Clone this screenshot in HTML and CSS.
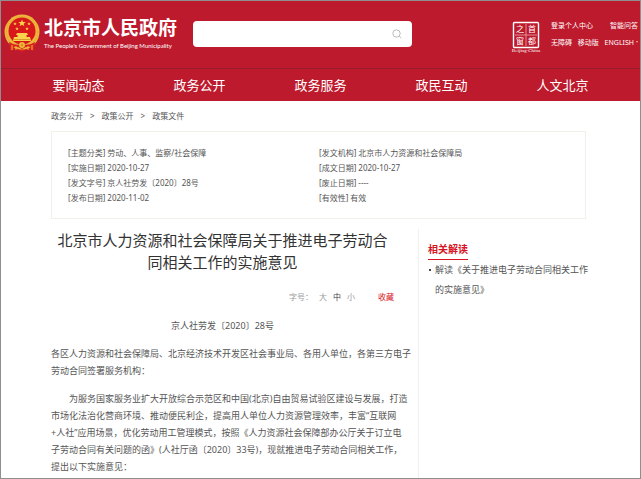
FILE: index.html
```html
<!DOCTYPE html>
<html lang="zh-CN">
<head>
	<title>北京市人民政府</title>
	<meta charset="UTF-8">
	<meta name="viewport" content="width=device-width, initial-scale=1">
	<link rel="stylesheet" href="styles.css">
</head>
<body>
	<header class="header">
		<div class="top">
			<a class="logo" href="#">
				<svg class="emblem" viewBox="0 0 36 38" aria-hidden="true">
					<path d="M7 30 L6 37 L12 35 L18 38 L24 35 L30 37 L29 30 Z" fill="#d8241c"/>
					<circle cx="18" cy="18" r="17.5" fill="#eeb53c"/>
					<circle cx="18" cy="18" r="15.5" fill="none" stroke="#dc9c2a" stroke-width="1" stroke-dasharray="1 2"/>
					<circle cx="18" cy="17" r="13.5" fill="#d9181b"/>
					<path d="M18 5.500l1 2.500h2.700l-2.100 1.700.8 2.600-2.400-1.500-2.400 1.500.8-2.600-2.100-1.700H17z" fill="#f8d24a"/>
					<g fill="#f8d24a">
						<path d="M11 8l.5 1.200h1.300l-1 .8.4 1.300-1.200-.7-1.200.7.4-1.300-1-.8h1.300z"/>
						<path d="M25 8l.5 1.200h1.300l-1 .8.4 1.300-1.200-.7-1.200.7.4-1.300-1-.8h1.300z"/>
						<path d="M13 13l.5 1.200h1.300l-1 .8.4 1.300-1.200-.7-1.200.7.4-1.300-1-.8h1.300z"/>
						<path d="M23 13l.5 1.200h1.300l-1 .8.4 1.300-1.200-.7-1.200.7.4-1.300-1-.8h1.300z"/>
						<path d="M13 19h10l1 2H12zM13.500 21h9v2h-9zM10 23h16l1 4H9z"/>
					</g>
					<path d="M10 25.500h16" stroke="#dc9c2a" stroke-width="1"/>
					<path d="M5 28Q11 32 18 30Q25 32 31 28L30 34Q24 31 18 35Q12 31 6 34Z" fill="#d8241c"/>
					<circle cx="18" cy="31" r="3" fill="#eeb53c"/>
					<circle cx="18" cy="31" r="1" fill="#c98218"/>
					<path d="M8 31v5M12 32v4M24 32v4M28 31v5" stroke="#eeb53c" stroke-width="1"/>
				</svg>
				<span class="logo-text">
					<strong class="logo-name">北京市人民政府</strong>
					<span class="logo-en">The People's Government of Beijing Municipality</span>
				</span>
			</a>
			<form class="search">
				<input class="search-input" type="text" aria-label="搜索">
				<button class="search-btn" type="button" aria-label="搜索">
					<svg viewBox="0 0 10 10" aria-hidden="true">
						<circle cx="4.500" cy="4.500" r="3.700"/>
						<path d="M7.300 7.300L9.300 9"/>
					</svg>
				</button>
			</form>
			<div class="top-right">
				<a class="window" href="#">
					<svg viewBox="0 0 30 32">
						<rect x="2.500" y="1.500" width="25" height="25" rx="1" fill="none" stroke="#fff" stroke-width="1.400"/>
						<path d="M15 3v22M4 14h22" stroke="#e08f99" stroke-width="1"/>
						<text x="9" y="11" font-size="8">之</text>
						<text x="21" y="11" font-size="8">首</text>
						<text x="9" y="23" font-size="8">窗</text>
						<text x="21" y="23" font-size="8">都</text>
						<text class="window-en" x="15" y="31" font-size="5">Beijing-China</text>
					</svg>
				</a>
				<div class="tools">
					<div class="tools-row">
						<a href="#">登录个人中心</a>
						<a href="#">智能问答</a>
					</div>
					<div class="tools-row">
						<a href="#">无障碍</a>
						<a href="#">移动版</a>
						<a class="english" href="#">ENGLISH</a>
					</div>
				</div>
			</div>
		</div>
		<nav class="nav">
			<a href="#">要闻动态</a>
			<a href="#">政务公开</a>
			<a href="#">政务服务</a>
			<a href="#">政民互动</a>
			<a href="#">人文北京</a>
		</nav>
	</header>

	<main class="container">
		<div class="crumbs">
			<a href="#">政务公开</a><span>&gt;</span><a href="#">政策公开</a><span>&gt;</span><a href="#">政策文件</a>
		</div>

		<div class="info">
			<ul>
				<li>[主题分类] 劳动、人事、监察/社会保障</li>
				<li>[实施日期] 2020-10-27</li>
				<li>[发文字号] 京人社劳发〔2020〕28号</li>
				<li>[发布日期] 2020-11-02</li>
			</ul>
			<ul>
				<li>[发文机构] 北京市人力资源和社会保障局</li>
				<li>[成文日期] 2020-10-27</li>
				<li>[废止日期] ----</li>
				<li>[有效性] 有效</li>
			</ul>
		</div>

		<div class="columns">
			<article class="article">
				<h1>北京市人力资源和社会保障局关于推进电子劳动合<br>同相关工作的实施意见</h1>
				<div class="font-size">
					<span>字号：</span>
					<button type="button">大</button>
					<button class="active" type="button">中</button>
					<button type="button">小</button>
					<a class="fav" href="#">收藏</a>
				</div>
				<p class="doc-no">京人社劳发〔2020〕28号</p>
				<div class="article-text">
					<p>各区人力资源和社会保障局、北京经济技术开发区社会事业局、各用人单位，各第三方电子<br>劳动合同签署服务机构：</p>
					<p class="indent">为服务国家服务业扩大开放综合示范区和中国(北京)自由贸易试验区建设与发展，打造<br>市场化法治化营商环境、推动便民利企，提高用人单位人力资源管理效率，丰富“互联网<br>+人社”应用场景，优化劳动用工管理模式，按照《人力资源社会保障部办公厅关于订立电<br>子劳动合同有关问题的函》(人社厅函〔2020〕33号)，现就推进电子劳动合同相关工作，<br>提出以下实施意见：</p>
				</div>
			</article>
			<aside class="related">
				<h2>相关解读</h2>
				<ul>
					<li><a href="#">解读《关于推进电子劳动合同相关工作<br>的实施意见》</a></li>
				</ul>
			</aside>
		</div>
	</main>
</body>
</html>
```

FILE: styles.css
```css
* {
	box-sizing: border-box;
}
body {
	display: flex;
	flex-direction: column;
	margin: 0;
	min-height: 100vh;
	border: 1px solid #8f8f8f;
	background: #fff;
	color: #555;
	font-family: "Noto Sans", "Noto Sans CJK SC", sans-serif;
	font-size: 8px;
}
h1, h2, p, ul {
	margin: 0;
	padding: 0;
}
ul {
	list-style: none;
}
a {
	color: inherit;
	text-decoration: none;
}

/* header */
.header {
	background: #bd1a2d;
	color: #fff;
}
.top {
	display: flex;
	align-items: flex-start;
	height: 68px;
	padding: 13px 2px 0 3px;
	border-bottom: 1px solid #981c2e;
}
.logo {
	display: flex;
	gap: 4px;
	width: 189px;
}
.emblem {
	flex: none;
	width: 36px;
	height: 38px;
}
.logo-text {
	display: flex;
	flex-direction: column;
	padding-top: 1px;
	white-space: nowrap;
}
.logo-name {
	font-size: 19px;
	line-height: 26px;
}
.logo-en {
	font-family: Lato, sans-serif;
	font-size: 6px;
	line-height: 9px;
}
.search {
	display: flex;
	align-items: center;
	width: 219px;
	height: 26px;
	margin-top: 7px;
	padding-right: 9px;
	border-radius: 4px;
	background: #fff;
}
.search-input {
	flex: 1;
	min-width: 0;
	height: 100%;
	padding: 0 8px;
	border: 0;
	background: none;
	outline: 0;
}
.search-btn {
	width: 12px;
	height: 12px;
	padding: 1px;
	border: 0;
	background: none;
}
.search-btn svg {
	display: block;
	fill: none;
	stroke: #bbb;
}
.top-right {
	display: flex;
	gap: 10px;
	margin-left: auto;
	padding-top: 7px;
}
.window svg {
	display: block;
	width: 30px;
	height: 32px;
}
.window text {
	fill: #fff;
	text-anchor: middle;
}
.window .window-en {
	font-family: "Liberation Serif", serif;
}
.tools {
	width: 87px;
	font-size: 7px;
	line-height: 16px;
	white-space: nowrap;
}
.tools-row {
	display: flex;
	justify-content: space-between;
	margin-top: -3px;
	margin-bottom: 4px;
}
.english::after {
	content: "";
	display: inline-block;
	margin-left: 2px;
	border: 1px solid transparent;
	border-top: 2px solid #f0b070;
	vertical-align: 1px;
}
.nav {
	display: flex;
	padding: 0 17px;
	font-size: 13px;
	line-height: 32px;
	text-align: center;
}
.nav a {
	flex: 1;
}

/* content */
.container {
	display: flex;
	flex: 1;
	flex-direction: column;
	padding: 0 54px 0 50px;
}
.crumbs {
	padding: 7px 0;
	line-height: 16px;
}
.crumbs span {
	margin: 0 7px;
}
.info {
	display: grid;
	grid-template-columns: 251px 1fr;
	padding: 13px 16px;
	border: 1px solid #f2f1e9;
	line-height: 15px;
}
.columns {
	display: grid;
	flex: 1;
	grid-template-columns: 367px 1fr;
	margin-top: 10px;
}
.article {
	padding-right: 24px;
	color: #555;
}
.article h1 {
	color: #333;
	font-size: 15px;
	font-weight: normal;
	line-height: 22px;
	text-align: center;
	white-space: nowrap;
}
.font-size {
	display: flex;
	justify-content: flex-end;
	gap: 6px;
	margin-top: 16px;
	color: #999;
	line-height: 16px;
}
.font-size button {
	padding: 0;
	border: 0;
	background: none;
	color: inherit;
	font: inherit;
}
.font-size .active {
	color: #444;
}
.fav {
	margin-left: 17px;
	color: #d7141f;
}
.doc-no {
	margin-top: 12px;
	font-size: 9px;
	line-height: 17px;
	text-align: center;
}
.article-text {
	margin-right: -24px;
	font-size: 9px;
	line-height: 17px;
	white-space: nowrap;
}
.article-text p {
	margin-top: 11px;
}
.indent {
	text-indent: 2em;
}
.related {
	padding: 11px 0 0 9px;
	border-left: 1px solid #f2f1e9;
}
.related h2 {
	display: inline-block;
	border-bottom: 1px solid #d7141f;
	color: #d7141f;
	font-size: 10px;
	line-height: 19px;
}
.related li {
	display: flex;
	gap: 4px;
	font-size: 9px;
	line-height: 20px;
	white-space: nowrap;
}
.related li::before {
	content: "";
	flex: none;
	width: 2px;
	height: 2px;
	margin: 9px 0 0 1px;
	background: #444;
}
```
